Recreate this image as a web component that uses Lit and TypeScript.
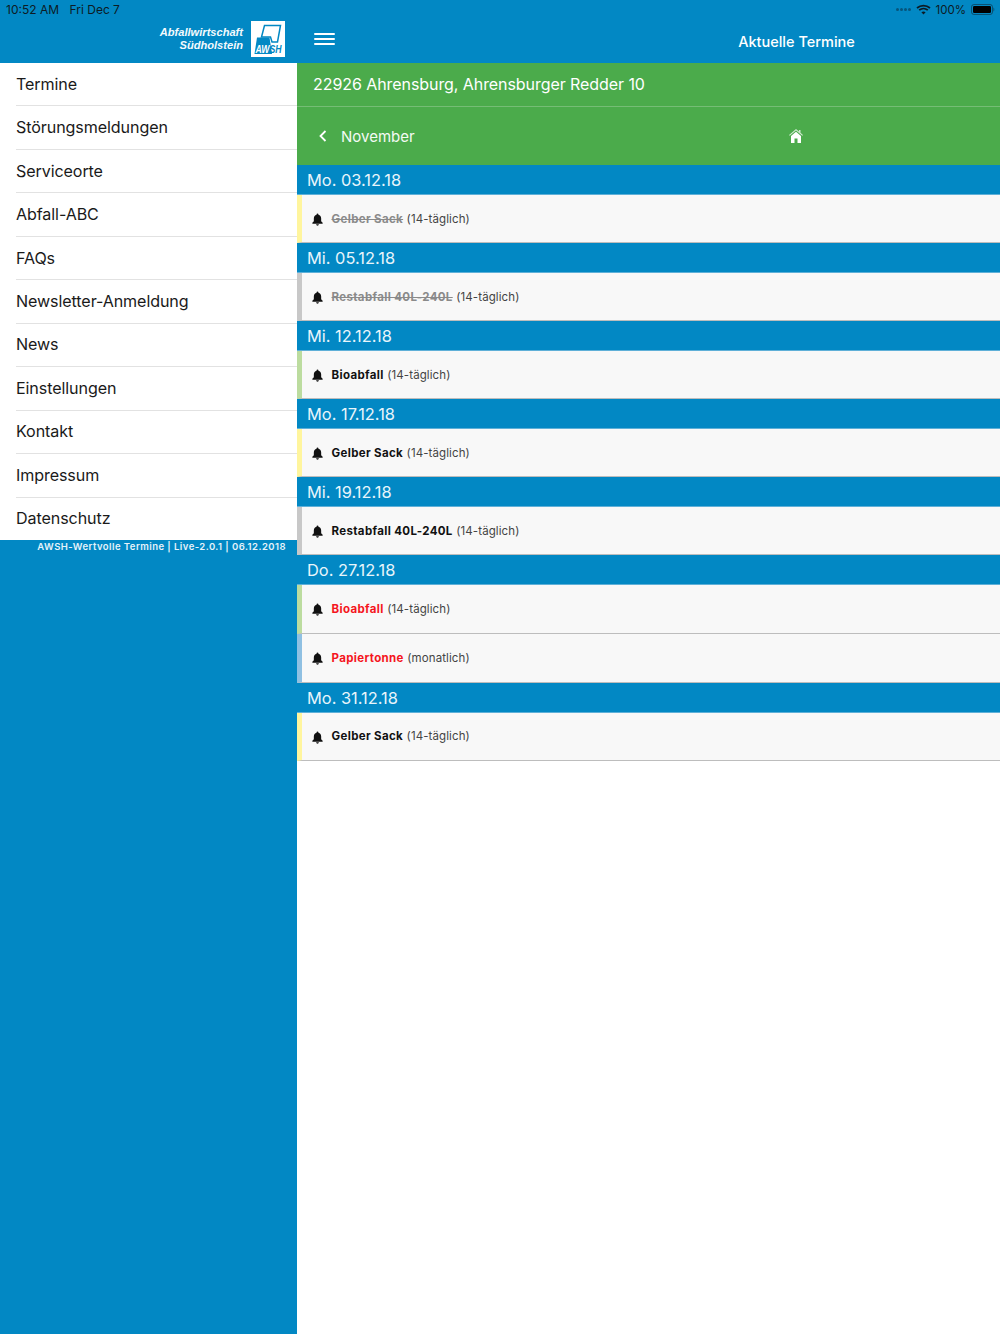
import { LitElement, html, css, svg } from "lit";
import { customElement } from "lit/decorators.js";

const MENU = ["Termine","Störungsmeldungen","Serviceorte","Abfall-ABC","FAQs","Newsletter-Anmeldung","News","Einstellungen","Kontakt","Impressum","Datenschutz"];
type Item = { name: string; freq: string; color: string; state?: "past" | "soon" };
const Y = "#fff59d", G = "#c8c8c8", B = "#bcdc9f", P = "#8fc0e2";
const DAYS: { date: string; items: Item[] }[] = [
  { date: "Mo. 03.12.18", items: [{ name: "Gelber Sack", freq: "(14-täglich)", color: Y, state: "past" }] },
  { date: "Mi. 05.12.18", items: [{ name: "Restabfall 40L-240L", freq: "(14-täglich)", color: G, state: "past" }] },
  { date: "Mi. 12.12.18", items: [{ name: "Bioabfall", freq: "(14-täglich)", color: B }] },
  { date: "Mo. 17.12.18", items: [{ name: "Gelber Sack", freq: "(14-täglich)", color: Y }] },
  { date: "Mi. 19.12.18", items: [{ name: "Restabfall 40L-240L", freq: "(14-täglich)", color: G }] },
  { date: "Do. 27.12.18", items: [{ name: "Bioabfall", freq: "(14-täglich)", color: B, state: "soon" }, { name: "Papiertonne", freq: "(monatlich)", color: P, state: "soon" }] },
  { date: "Mo. 31.12.18", items: [{ name: "Gelber Sack", freq: "(14-täglich)", color: Y }] },
];

const bell = svg`<svg class="bell" viewBox="0 0 12 14" width="11" height="13"><path fill="#111" d="M6 0.4c.6 0 1 .4 1 1v.5c1.900.5 3 2 3 4v3l1.600 1.700v.9H.4v-.9L2 9V5.900c0-2 1.100-3.500 3-4v-.5c0-.6.4-1 1-1zM4.500 12.300h3c0 .9-.7 1.400-1.500 1.400s-1.500-.5-1.500-1.400z"/></svg>`;

@customElement("app-root")
export class AppRoot extends LitElement {
  static styles = css`
    :host { display: block; width: 1000px; height: 1334px; overflow: hidden; position: relative; font-family: Inter, "Liberation Sans", sans-serif; background: #fff; color: #111; }
    .page { display: grid; grid-template-columns: 297px 1fr; height: 1334px; }
    .side { background: #0288c4; display: flex; flex-direction: column; }
    .brand { height: 63px; box-sizing: border-box; padding: 21px 12px 0 0; display: flex; justify-content: flex-end; gap: 8px; }
    .brand-text { font: italic bold 11.1px/13px "Liberation Sans", sans-serif; color: #f4fafd; text-align: right; padding-top: 5px; }
    .logo { display: block; }
    .menu { background: #fff; height: 477px; display: flex; flex-direction: column; }
    .menu-row { flex: 1; margin-left: 16px; padding-bottom: 1px; display: flex; align-items: center; font-size: 16.1px; color: #1a1a1a; border-bottom: 1px solid #e2e2e2; box-sizing: border-box; letter-spacing: -0.1px; }
    .menu-row:last-child { border-bottom: 0; }
    .version { font-size: 9.500px; font-weight: 600; color: #e6f3fa; text-align: right; padding: 1px 11px 0 0; line-height: 12px; letter-spacing: 0.45px; white-space: nowrap; }
    .main { display: flex; flex-direction: column; }
    .top { height: 63px; background: #0288c4; display: flex; align-items: flex-start; position: relative; }
    .burger { margin: 33px 0 0 17px; display: flex; flex-direction: column; gap: 3.500px; width: 21px; }
    .burger i { display: block; height: 1.500px; background: #fff; border-radius: 1px; }
    .title { position: absolute; left: 299px; right: 3px; top: 33px; text-align: center; color: #fff; font-size: 14.5px; font-weight: 500; line-height: 17px; }
    .address { height: 44px; box-sizing: border-box; background: #4bab4b; color: #fff; font-size: 16px; padding: 0 0 2px 16px; display: flex; align-items: center; border-bottom: 1px solid #75bd75; letter-spacing: -0.07px; }
    .nav { height: 58px; box-sizing: border-box; background: #4bab4b; color: #f4faf4; position: relative; display: flex; align-items: center; padding: 1px 0 0 22px; font-size: 15px; }
    .nav .chev { margin: -2px 14px 0 0; }
    .nav .home { position: absolute; left: 492px; top: 22px; }
    .date { height: 30px; box-sizing: border-box; background: #0288c4; color: #e8f5fb; font-size: 16.400px; padding: 0 0 0 10px; display: flex; align-items: center; border-bottom: 1px solid #5fb0d8; }
    .item { height: 48px; box-sizing: border-box; background: #f8f8f8; border-left: 5px solid #ccc; border-bottom: 1px solid #bdbdbd; display: flex; align-items: center; padding: 0 0 0 10px; font-size: 11.500px; color: #444; letter-spacing: 0.1px; }
    .double .item { height: 49px; padding-bottom: 1px; }
    section:last-child .item { padding-bottom: 1px; }
    .bell { margin: 2px 9px 0 -0.5px; flex: none; }
    .name { font-weight: 700; color: #111; margin-right: 3.500px; letter-spacing: 0.35px; }
    .past .name { color: #8a8a8a; text-decoration: line-through; }
    .soon .name { color: #f5151d; }
    .status { position: absolute; inset: 0 0 auto 0; height: 19px; display: flex; align-items: center; padding: 0 5px 0 6px; font-size: 12px; color: #0d1b24; }
    .status .date-part { margin-left: 10.500px; }
    .status .right { margin-left: auto; display: flex; align-items: center; gap: 5px; font-size: 11.500px; }
    .dots { display: flex; gap: 1px; }
    .dots i { width: 3px; height: 3px; border-radius: 50%; background: #06557c; }
  `;

  render() {
    return html`
      <div class="page">
        <aside class="side">
          <div class="brand">
            <div class="brand-text">Abfallwirtschaft<br />Südholstein</div>
            <svg class="logo" width="34" height="36" viewBox="0 0 34 36">
              <rect width="34" height="36" fill="#fff" />
              <path d="M13.500 4.500H29.500L26.500 21H21L19.500 16H10.500Z" fill="none" stroke="#0288c4" stroke-width="1.500" />
              <path d="M6 16.500H18.500L21 33H3.500Z" fill="#0288c4" />
              <text x="4.500" y="31.500" font-family="Liberation Sans" font-style="italic" font-weight="700" font-size="10" textLength="26" lengthAdjust="spacingAndGlyphs"><tspan fill="#fff">AW</tspan><tspan fill="#0288c4">SH</tspan></text>
            </svg>
          </div>
          <nav class="menu">${MENU.map((m) => html`<div class="menu-row">${m}</div>`)}</nav>
          <div class="version">AWSH-Wertvolle Termine | Live-2.0.1 | 06.12.2018</div>
        </aside>
        <main class="main">
          <header class="top">
            <div class="burger"><i></i><i></i><i></i></div>
            <div class="title">Aktuelle Termine</div>
          </header>
          <div class="address">22926 Ahrensburg, Ahrensburger Redder 10</div>
          <div class="nav">
            <svg class="chev" width="8" height="12" viewBox="0 0 8 12"><path d="M6.500 1L1.500 6l5 5" fill="none" stroke="#fff" stroke-width="1.800" /></svg>
            <span>November</span>
            <svg class="home" width="14" height="14" viewBox="0 0 14 14"><path fill="#cfe8cf" d="M7 0L0 6l.7.8L7 1.500l6.300 5.300.7-.8L11.500 3.800V1H10v1.500z" /><path fill="#fff" d="M7 2.800L2 7v7h3.500V9.500h3V14H12V7z" /></svg>
          </div>
          ${DAYS.map((d) => html`
            <section class=${d.items.length > 1 ? "double" : ""}>
              <div class="date">${d.date}</div>
              ${d.items.map((it) => html`
                <div class="item ${it.state ?? ""}" style="border-left-color:${it.color}">
                  ${bell}<span class="name">${it.name}</span><span>${it.freq}</span>
                </div>`)}
            </section>`)}
        </main>
      </div>
      <div class="status">
        <span>10:52 AM</span><span class="date-part">Fri Dec 7</span>
        <div class="right">
          <span class="dots"><i></i><i></i><i></i><i></i></span>
          <svg width="15" height="11" viewBox="0 0 15 11"><path fill="none" stroke="#0d1b24" stroke-width="1.700" d="M1 4c3.700-3.300 9.300-3.300 13 0M3.200 6.200c2.500-2.200 6.100-2.200 8.600 0" /><path fill="#0d1b24" d="M5.400 8.200c1.300-1.100 2.900-1.100 4.200 0L7.500 10.500z" /></svg>
          <span>100%</span>
          <svg width="24" height="11" viewBox="0 0 24 11"><rect x="0.500" y="0.500" width="21" height="10" rx="2.500" fill="none" stroke="#0d1b24" stroke-opacity=".5" /><rect x="2" y="2" width="18" height="7" rx="1.200" fill="#000" /><path d="M22.500 3.500c1 .3 1 3.700 0 4z" fill="#0d1b24" fill-opacity=".6" /></svg>
        </div>
      </div>
    `;
  }
}
